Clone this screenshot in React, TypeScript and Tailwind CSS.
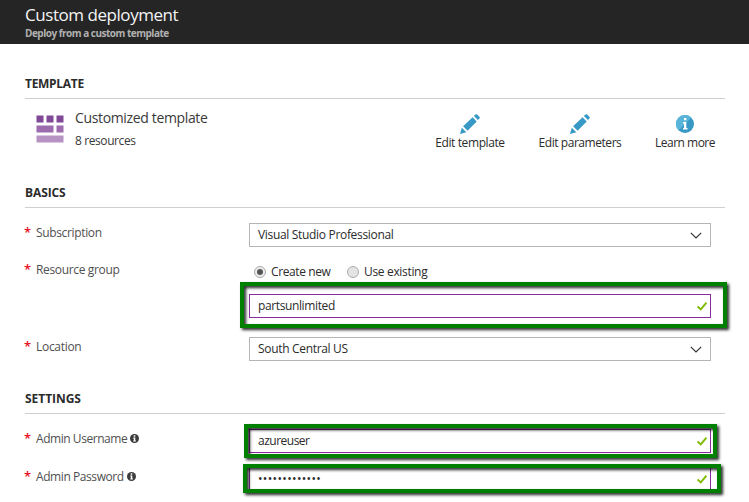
import type { ReactNode } from "react";

function SectionTitle({ children, className }: { children: ReactNode; className: string }) {
  return (
    <h2 className={`h-[25px] border-b border-[#cfcfcf] text-[12px] leading-[20px] font-bold text-[#2b2b2b] ${className}`}>
      <span>{children}</span>
    </h2>
  );
}

function Label({ children, tracking, info, className = "" }: { children: ReactNode; tracking: string; info?: boolean; className?: string }) {
  return (
    <div className={`flex w-[224px] shrink-0 items-start leading-[20px] text-[#505050] ${className}`}>
      <span className="-ml-px w-[12px] shrink-0 text-[13px] leading-[18px] font-semibold text-[#e81123]">*</span>
      <span className={tracking}>{children}</span>
      {info && (
        <svg className="mt-[5px] ml-[3px] size-[9px]" viewBox="0 0 9 9">
          <circle cx="4.5" cy="4.5" r="4.5" fill="#3c3c3c" />
          <path d="M3.7 1.3h1.6v1.4H3.7zM3.2 3.6h2.1v3h.6v.9H3.2v-.9h.6V4.5h-.6z" fill="#fff" />
        </svg>
      )}
    </div>
  );
}

function Chevron() {
  return (
    <svg className="mr-2 h-[7px] w-[12px]" viewBox="0 0 12 7" fill="none" stroke="#333" strokeWidth="1.2">
      <path d="M.8.8 6 6 11.2.8" />
    </svg>
  );
}

function Check() {
  return (
    <svg className="mr-[3px] h-[9px] w-[10px]" viewBox="0 0 10 9" fill="none" stroke="#7fba00" strokeWidth="1.9">
      <path d="M.6 4.4 3.8 7.4 9.4.7" />
    </svg>
  );
}

function Field({ children, tracking, icon, active }: { children: ReactNode; tracking: string; icon: ReactNode; active?: boolean }) {
  return (
    <div className={`flex h-[24px] w-[462px] items-center justify-between border bg-white pl-2 text-[#2b2b2b] ${active ? "border-[#882aa0]" : "border-[#b5b5b5]"}`}>
      <span className={tracking}>{children}</span>
      {icon}
    </div>
  );
}

function Highlight({ className }: { className: string }) {
  return <div className={`pointer-events-none absolute border-4 border-[#008000] drop-shadow-[2px_2px_1.5px_rgba(0,0,0,0.85)] ${className}`} />;
}

function Pencil() {
  return (
    <svg className="size-[20px]" viewBox="0 0 20 20" fill="#3999c6">
      <path d="M0 20 1.8 13.7 6.3 18.2zM3.1 12.3 12.6 3.3 16.7 7.4 7.6 16.8zM13.9 2.1 15.4.6Q16.3-.1 17.2.6L19.4 2.8Q20.2 3.7 19.4 4.6L17.9 6.1z" />
    </svg>
  );
}

function Action({ icon, children, className }: { icon: ReactNode; children: ReactNode; className: string }) {
  return (
    <div className={`flex flex-col items-center text-[#2b2b2b] ${className}`}>
      <div className="flex h-[20px] items-center">{icon}</div>
      <span className="leading-[18px]">{children}</span>
    </div>
  );
}

export default function App() {
  return (
    <main className="h-[502px] w-[749px] overflow-hidden bg-white font-['Open_Sans','Noto_Sans',sans-serif] text-[12px] whitespace-nowrap">
      <header className="h-[44px] bg-[#252525] pl-[25px]">
        <h1 className="h-[26px] pt-[3px] text-[17px] leading-[24px] tracking-[-0.45px] text-[#f4f4f4]">Custom deployment</h1>
        <p className="text-[10px] leading-[14px] font-bold tracking-[-0.5px] text-[#b0b0b0]">Deploy from a custom template</p>
      </header>

      <div className="ml-[25px] w-[700px]">
        <section className="h-[109px] pt-[30px]">
          <SectionTitle className="tracking-[-0.3px]">TEMPLATE</SectionTitle>
          <div className="flex">
            <svg className="mt-4 ml-[11px] h-[28px] w-[28px] shrink-0" viewBox="0 0 28 28">
              <path d="M.5.5h7v7h-7zM10.5.5h7v7h-7zM20.5.5h7v7h-7z" fill="#804998" />
              <path d="M.5 10.5h17v7H.5zM20.5 10.5h7v7h-7z" fill="#9c6cae" />
              <path d="M.5 20.5h27v7H.5z" fill="#b793c4" />
            </svg>
            <div className="ml-[11px] w-[335px] shrink-0 pt-[9px] text-[#3a3a3a]">
              <div className="text-[14px] leading-[20px] tracking-[-0.35px]">Customized template</div>
              <div className="mt-[3px] leading-[20px] tracking-[-0.4px]">8 resources</div>
            </div>
            <div className="flex pt-[15px]">
              <Action icon={<Pencil />} className="w-[120px] shrink-0 tracking-[-0.4px]">Edit template</Action>
              <Action icon={<Pencil />} className="w-[100px] shrink-0 tracking-[-0.45px]">Edit parameters</Action>
              <Action
                className="w-[110px] shrink-0 tracking-[-0.5px]"
                icon={
                  <svg className="size-[18px]" viewBox="0 0 18 18">
                    <circle cx="9" cy="9" r="9" fill="#3999c6" />
                    <path d="M2.6 15.4A9 9 0 0 1 15.4 2.6z" fill="#59b4d9" />
                    <path d="M8 3h2.3v2.2H8zM7 7h3.3v6h1.2v1.4H7V13h1V8.4H7z" fill="#fff" />
                  </svg>
                }
              >
                Learn more
              </Action>
            </div>
          </div>
        </section>

        <section className="pt-[30px]">
          <SectionTitle className="tracking-[-0.1px]">BASICS</SectionTitle>
          <div className="flex h-[39px] pt-[15px]">
            <Label tracking="tracking-[-0.35px]">Subscription</Label>
            <Field tracking="tracking-[-0.32px]" icon={<Chevron />}>Visual Studio Professional</Field>
          </div>
          <div className="relative flex h-[75px] pt-[13px]">
            <Label tracking="tracking-[-0.35px]">Resource group</Label>
            <div>
              <div className="flex h-[22px] items-center pt-[1px] pl-[5px] text-[#2b2b2b]">
                <span className="flex size-[12px] items-center justify-center rounded-full border border-[#aaa] bg-[#eee]">
                  <span className="size-[6px] rounded-full bg-[#555]" />
                </span>
                <span className="ml-[5px] w-[76px] tracking-[-0.4px]">Create new</span>
                <span className="size-[12px] rounded-full border border-[#aaa] bg-[#e4e4e4]" />
                <span className="ml-[5px] tracking-[-0.33px]">Use existing</span>
              </div>
              <div className="mt-[12px]">
                <Field active tracking="tracking-[-0.38px]" icon={<Check />}>partsunlimited</Field>
              </div>
            </div>
            <Highlight className="top-[35px] left-[215px] h-[46px] w-[487px]" />
          </div>
          <div className="flex h-[39px] pt-[15px]">
            <Label tracking="tracking-[-0.3px]">Location</Label>
            <Field tracking="tracking-[-0.32px]" icon={<Chevron />}>South Central US</Field>
          </div>
        </section>

        <section className="pt-[28px]">
          <SectionTitle className="tracking-[-0.05px]">SETTINGS</SectionTitle>
          <div className="relative flex h-[38px] pt-[15px]">
            <Label info tracking="tracking-[-0.45px]">Admin Username</Label>
            <Field active tracking="tracking-[-0.5px]" icon={<Check />}>azureuser</Field>
            <Highlight className="top-[10px] left-[219px] h-[34px] w-[473px]" />
          </div>
          <div className="relative flex h-[38px] pt-[15px]">
            <Label info tracking="tracking-[-0.42px]">Admin Password</Label>
            <Field
              active
              tracking=""
              icon={<Check />}
            >
              <span className="text-[12px] tracking-[0.35px]">•••••••••••••</span>
            </Field>
            <Highlight className="top-[12px] left-[218px] h-[29px] w-[478px]" />
          </div>
        </section>
      </div>
    </main>
  );
}
